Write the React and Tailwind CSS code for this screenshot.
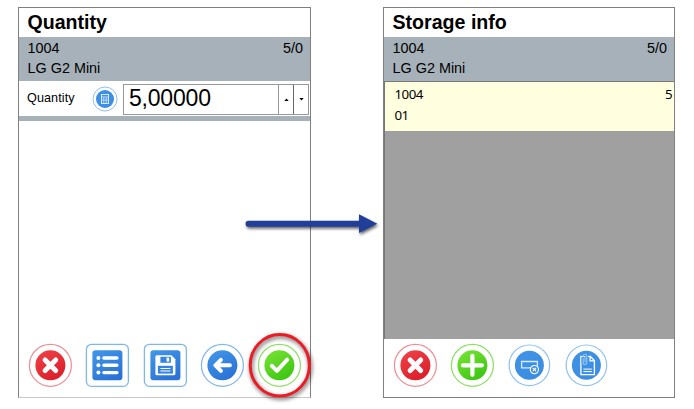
import React from 'react';

function Badge({ ring, from, to, id, square, small, children }) {
  const r = small ? 20.3 : 21;
  const inner = small ? 14.5 : 15;
  return (
    <svg className="block h-[44px] w-[44px] shrink-0 overflow-visible" viewBox="-22.4 -22.3 44 44" fill="none">
      <defs>
        <linearGradient id={id} x1="0" y1="0" x2="0.6" y2="1">
          <stop offset="0" stopColor={from} />
          <stop offset="1" stopColor={to} />
        </linearGradient>
      </defs>
      {square ? (
        <>
          <rect x="-21" y="-21" width="42" height="42" rx="5" fill="#fff" stroke={ring} strokeWidth="1.3" />
          <rect x="-15" y="-15" width="30" height="30" rx="3" fill={`url(#${id})`} />
        </>
      ) : (
        <>
          <circle r={r} fill="#fff" stroke={ring} strokeWidth="1.2" />
          <circle r={inner} fill={`url(#${id})`} />
        </>
      )}
      {children}
    </svg>
  );
}

function Cancel({ id }) {
  return (
    <Badge id={id} ring="#ee8f97" from="#f0434a" to="#dc1f2b">
      <path d="M-5.3-5.3 5.3 5.3M5.3-5.3-5.3 5.3" stroke="#fff" strokeWidth="5" strokeLinecap="round" />
    </Badge>
  );
}

function InfoBand() {
  return (
    <div className="flex h-[44px] shrink-0 justify-between bg-[#a7b1ba] pl-[8.5px] pr-[7px] pt-[2px] text-[14.4px] leading-[19.5px]">
      <div>
        <div>1004</div>
        <div>LG G2 Mini</div>
      </div>
      <div>5/0</div>
    </div>
  );
}

function Title({ children }) {
  return (
    <h1 className="h-[29px] shrink-0 pl-[8.5px] text-[19.6px] font-bold leading-[28px]">{children}</h1>
  );
}

function QuantityPanel() {
  return (
    <section className="flex h-[391px] w-[293px] flex-col border border-[#808080] border-b-[#c8c8c8] bg-white">
      <Title>Quantity</Title>
      <InfoBand />
      <div className="flex h-[35px] shrink-0 items-center pl-[8px] pr-px">
        <span className="w-[65px] pb-[2px] text-[12.6px] leading-4 tracking-[0.1px]">Quantity</span>
        <svg className="h-[26px] w-[26px]" viewBox="-13 -13 26 26" fill="none">
          <circle r="12" stroke="#8fc0ef" />
          <circle r="9" fill="#3d8fe3" />
          <rect x="-3.5" y="-4.5" width="7" height="9" stroke="#d9eafb" />
          <path d="M-3.5-2H3.5M-3.5 1H3.5M-1.2-2V4.5M1.2-2V4.5" stroke="#d9eafb" strokeWidth=".8" />
        </svg>
        <div className="ml-[5px] mt-px flex h-[31px] w-[186px] border border-[#999999]">
          <div className="flex-1 pl-[5px] text-[23px] leading-[26px] tracking-[-0.2px]">5,00000</div>
          <div className="flex w-[15px] items-center justify-center border-l border-[#999999]">
            <svg className="h-[3px] w-[5px]" viewBox="0 0 5 3"><path d="M.3 3 2.5.5 4.7 3Z" /></svg>
          </div>
          <div className="flex w-[15px] items-center justify-center border-l border-[#666666]">
            <svg className="h-[3px] w-[5px]" viewBox="0 0 5 3"><path d="M.3 0 2.5 2.5 4.7 0Z" /></svg>
          </div>
        </div>
      </div>
      <div className="h-[5px] shrink-0 bg-[#a7b1ba]" />
      <div className="flex-1" />
      <div className="flex pb-[10px] pl-[9px]">
        <Cancel id="qc" />
        <div className="ml-[13px]">
          <Badge id="ql" square ring="#80b6ee" from="#4298e8" to="#2b73d7">
            <path d="M-3.5-7.3H9.5M-3.5 0H9.5M-3.5 7.3H9.5" stroke="#fff" strokeWidth="3.4" strokeLinecap="round" />
            <g fill="#fff"><circle cx="-9" cy="-7.3" r="2" /><circle cx="-9" r="2" /><circle cx="-9" cy="7.3" r="2" /></g>
          </Badge>
        </div>
        <div className="ml-[14px]">
          <Badge id="qs" square ring="#80b6ee" from="#4298e8" to="#2b73d7">
            <path d="M-8.5-10H6L10-6V8.5Q10 10 8.5 10H-8.5Q-10 10-10 8.5V-8.5Q-10-10-8.5-10Z" fill="#fff" />
            <path d="M-5-8.5H5.5V-2.5H-5Z" fill="#3684df" />
            <rect x="1.2" y="-7.7" width="2.6" height="4" fill="#fff" />
            <rect x="-7.5" y="0.5" width="15" height="7.8" fill="#3684df" />
            <path d="M-5 3.2H5M-5 5.7H5" stroke="#fff" strokeWidth="1" />
          </Badge>
        </div>
        <div className="ml-[13px]">
          <Badge id="qb" ring="#80b6ee" from="#4298e8" to="#2b73d7">
            <path d="M-7 0H7.5M-1.5-5.5-7 0-1.5 5.5" stroke="#fff" strokeWidth="4" strokeLinecap="round" strokeLinejoin="round" />
          </Badge>
        </div>
        <div className="relative ml-[13px]">
          <Badge id="qo" ring="#8ce063" from="#7ce536" to="#3ec713">
            <path d="M-7.5.5-2.5 5.5 7.8-5.7" stroke="#fff" strokeWidth="4" strokeLinecap="round" strokeLinejoin="round" />
          </Badge>
          <svg className="absolute -left-[14px] -top-[14px] h-[72px] w-[72px] drop-shadow-[1px_2px_2px_rgba(0,0,0,0.65)]" viewBox="-36.8 -36.2 72 72" fill="none">
            <ellipse rx="29.6" ry="30.8" stroke="#ed1c24" strokeWidth="3" />
          </svg>
        </div>
      </div>
    </section>
  );
}

function StoragePanel() {
  return (
    <section className="flex h-[391px] w-[292px] flex-col border border-[#808080] bg-white">
      <Title>Storage info</Title>
      <InfoBand />
      <div className="flex h-[258px] shrink-0 flex-col border-l border-t border-[#777777] bg-[#a0a0a0]">
        <div className="flex h-[49px] justify-between bg-[#ffffdf] pl-[9.5px] pr-[2px] pt-[2px] font-['Noto_Sans',sans-serif] text-[13.3px] leading-[21px] tracking-[-0.5px]">
          <div>
            <div>1004</div>
            <div>01</div>
          </div>
          <div>5</div>
        </div>
      </div>
      <div className="flex flex-1 items-center pb-[6px] pl-[9px]">
        <Cancel id="sc" />
        <div className="ml-[13px]">
          <Badge id="sa" ring="#8ce063" from="#7ce536" to="#3ec713">
            <path d="M-9.5 0H9.5M0-9.5V9.5" stroke="#fff" strokeWidth="4.2" strokeLinecap="round" />
          </Badge>
        </div>
        <div className="ml-[13px]">
          <Badge id="sr" small ring="#8fc1f1" from="#4093e5" to="#3b8de3">
            <path d="M-7.8-3.8H8V2.5H-7.8Z" stroke="#d8eafb" strokeWidth="1.3" />
            <circle cx="5" cy="4.3" r="4.1" fill="#3d90e4" stroke="#fff" strokeWidth="1.1" />
            <path d="M3.4 2.7 6.6 5.9M6.6 2.7 3.4 5.9" stroke="#fff" strokeWidth="1.2" />
          </Badge>
        </div>
        <div className="ml-[13px]">
          <Badge id="sd" small ring="#8fc1f1" from="#4093e5" to="#3b8de3">
            <path d="M-5.5-8.8H4L8-4.8V9.4H-5.5ZM3.7-8.8V-4.5H8" stroke="#fff" strokeWidth="1.3" />
            <path d="M-3 3.8H5.5M-3 6.3H5.5" stroke="#fff" strokeWidth="1" />
            <path d="M-3.3-8V-3Q-3.3-1.2-1.5-1.2T.4-3V-9Q.4-11-1.4-11T-3.2-9" stroke="#3d90e4" strokeWidth="3" />
            <path d="M-3.3-7V-2.5Q-3.3-.8-1.5-.8T.4-2.5V-9Q.4-11-1.4-11T-3.2-9M-1.4-8V-3" stroke="#9cc9f4" strokeWidth="1.1" />
          </Badge>
        </div>
      </div>
    </section>
  );
}

export default function App() {
  return (
    <main className="relative flex h-[409px] w-[694px] gap-[72px] overflow-hidden bg-white pl-[18px] pt-[7px] font-['Liberation_Sans',Arial,sans-serif] text-black">
      <QuantityPanel />
      <StoragePanel />
      <svg className="absolute left-[240px] top-[208px] h-[36px] w-[144px] drop-shadow-[1px_2px_1.5px_rgba(0,0,0,0.6)]" viewBox="240 208 144 36">
        <path d="M248.5 223.7H362" stroke="#213f99" strokeWidth="6" strokeLinecap="round" />
        <path d="M359 214.3 377.3 223.7 359 233Z" fill="#213f99" />
      </svg>
    </main>
  );
}
